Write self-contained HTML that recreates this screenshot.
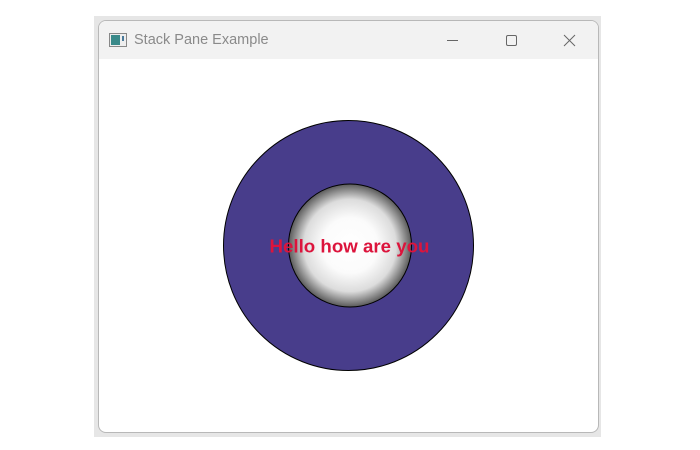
<!DOCTYPE html>
<html><head><style>
html,body{margin:0;padding:0;width:700px;height:450px;background:#fff;overflow:hidden;font-family:"Liberation Sans",sans-serif}
.sh{position:absolute;left:94px;top:16px;width:507px;height:421px;background:#e6e6e6}
.win{position:absolute;left:98px;top:20px;width:501px;height:413px;background:#fff;border:1px solid #b8b8b8;border-radius:8px;box-sizing:border-box;overflow:hidden}
.tb{position:absolute;left:0;top:0;width:100%;height:38px;background:#f2f2f2}
.title{position:absolute;left:35px;top:11px;font-size:14.5px;color:#8a8a8a}
</style></head><body>
<div class="sh"></div>
<div class="win"><div class="tb">
<svg style="position:absolute;left:10px;top:12px" width="18" height="14"><rect x="0.5" y="0.5" width="17" height="13" fill="#eee" stroke="#888"/><rect x="2" y="2" width="9" height="10" fill="#3a8a8a"/><rect x="13" y="3" width="2" height="5" fill="#4a7a9a"/></svg>
<div class="title">Stack Pane Example</div>
<svg style="position:absolute;left:340px;top:10px" width="140" height="20"><line x1="8" y1="9.5" x2="19" y2="9.5" stroke="#666"/><rect x="67.5" y="4.5" width="10" height="10" rx="1.5" fill="none" stroke="#666"/><path d="M125 4L136 15M136 4L125 15" stroke="#666"/></svg>
</div></div>
<svg style="position:absolute;left:0;top:0" width="700" height="450">
<defs><radialGradient id="g" cx="50%" cy="50%" r="50%"><stop offset="0" stop-color="#fff"/><stop offset="0.45" stop-color="#fbfbfb"/><stop offset="0.75" stop-color="#dcdcdc"/><stop offset="1" stop-color="#5a5a5a"/></radialGradient></defs>
<circle cx="348.5" cy="245.5" r="125" fill="#483d8b" stroke="#000"/>
<circle cx="350" cy="245.5" r="61.5" fill="url(#g)" stroke="#000"/>
<text x="349.5" y="252.5" text-anchor="middle" font-family="Liberation Sans,sans-serif" font-weight="bold" font-size="18.7" fill="#dc143c">Hello how are you</text>
</svg>
</body></html>
